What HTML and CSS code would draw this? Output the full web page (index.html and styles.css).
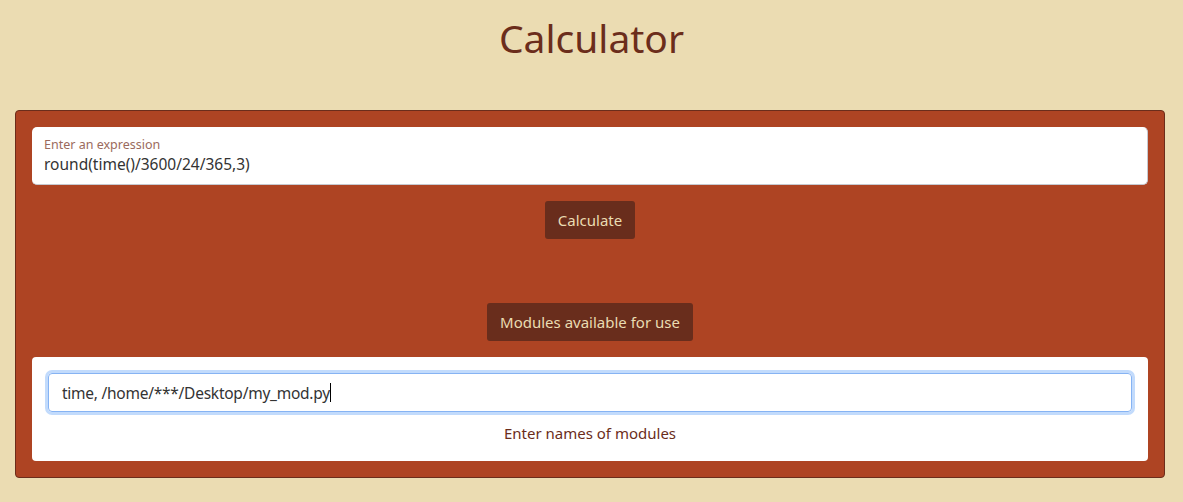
FILE: index.html
```html
<!DOCTYPE html>
<html>
<head>
<meta charset="utf-8">
<link rel="stylesheet" href="styles.css">
</head>
<body>
<h1 class="title">Calculator</h1>
<main class="panel">
  <div class="field">
    <label class="field-label">Enter an expression</label>
    <div class="field-value">round(time()/3600/24/365,3)</div>
  </div>
  <div class="row row-calc"><button class="btn">Calculate</button></div>
  <div class="row row-mod"><button class="btn">Modules available for use</button></div>
  <div class="card">
    <div class="mod-input"><span class="mod-text">time, /home/***/Desktop/my_mod.py</span><span class="caret"></span></div>
    <div class="hint">Enter names of modules</div>
  </div>
</main>
</body>
</html>
```
FILE: styles.css
```css
html, body { margin: 0; padding: 0; }
body {
  background: #ebdcb2;
  font-family: "Noto Sans", "Open Sans", sans-serif;
  height: 502px;
  overflow: hidden;
}
.title {
  margin: 0;
  padding-top: 14px;
  height: 110px;
  box-sizing: border-box;
  text-align: center;
  font-weight: 400;
  font-size: 39px;
  line-height: 48px;
  color: #6b2d1b;
}
.panel {
  margin: 0 18px 0 15px;
  background: #ae4423;
  border: 1px solid #6b2d1b;
  border-radius: 4px;
  padding: 16px 16px 15px 16px;
  height: 368px;
  box-sizing: border-box;
  display: flex;
  flex-direction: column;
}
.field {
  background: #fff;
  border-radius: 5px;
  border-bottom: 1px solid #c6c9d0;
  border-right: 1px solid #c6c9d0;
  height: 58px;
  flex: none;
  box-sizing: border-box;
  padding: 10px 12px 0 12px;
}
.field-label {
  display: block;
  font-size: 12.5px;
  line-height: 16px;
  color: #9b6a5c;
}
.field-value {
  font-size: 15.5px;
  line-height: 22px;
  color: #333;
}
.row { display: flex; justify-content: center; flex: none; height: 38px; }
.row-calc { margin-top: 16px; }
.row-mod { margin-top: 64px; }
.btn {
  background: #692d1c;
  color: #eadcb2;
  border: none;
  border-radius: 3px;
  font-family: inherit;
  font-size: 15px;
  height: 38px;
  padding: 0 13px;
}
.card {
  margin-top: 16px;
  background: #fff;
  border-radius: 4px;
  height: 104px;
  flex: none;
  box-sizing: border-box;
  padding: 16px 16px 0 16px;
}
.mod-input {
  height: 39px;
  box-sizing: border-box;
  border: 1px solid #86b3f3;
  box-shadow: 0 0 0 3px #c2dbfc;
  border-radius: 4px;
  padding: 0 13px;
  display: flex;
  align-items: center;
  font-size: 15.5px;
  color: #333;
}
.mod-text { letter-spacing: -0.25px; }
.caret {
  display: inline-block;
  width: 1px;
  height: 19px;
  background: #000;
}
.hint {
  text-align: center;
  margin-top: 10px;
  font-size: 15px;
  line-height: 22px;
  color: #6b2d1b;
}
```
